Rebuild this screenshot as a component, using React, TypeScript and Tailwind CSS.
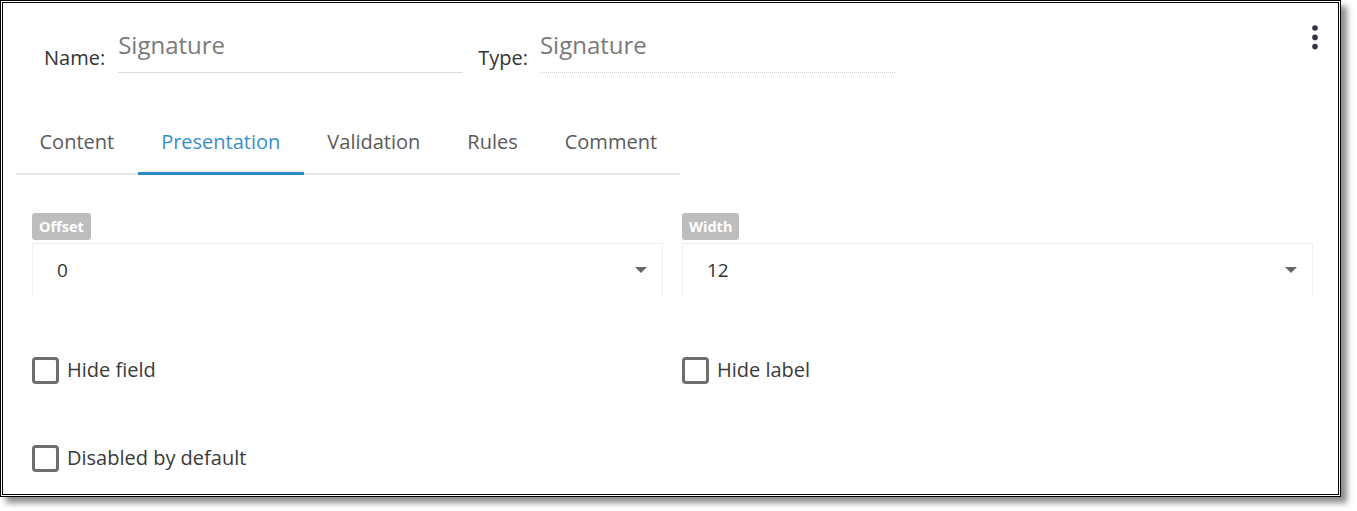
import React from "react";

const font = { fontFamily: '"Open Sans", "Noto Sans", sans-serif' };

function Caret() {
  return (
    <svg width="12" height="6" viewBox="0 0 12 6" className="shrink-0">
      <path d="M0 0 L12 0 L6 6 Z" fill="#666" />
    </svg>
  );
}

function SelectField({ label, value }: { label: string; value: string }) {
  return (
    <div className="flex flex-col items-start">
      <div className="h-[27px] rounded-[3px] bg-[#bdbdbd] px-[7px] text-[14.5px] font-bold leading-[27px] text-white">
        {label}
      </div>
      <div className="mt-[3px] flex h-[53px] w-full items-center justify-between border-x border-t border-[#efefef] pl-[24px] pr-[15px]">
        <span className="text-[19px] text-[#333]">{value}</span>
        <Caret />
      </div>
    </div>
  );
}

function Check({ label }: { label: string }) {
  return (
    <div className="flex items-center">
      <div className="h-[27px] w-[27px] rounded-[4px] border-[3px] border-[#6e6e6e]" />
      <span className="ml-[8px] text-[20px] leading-[28px] text-[#3a3a3a]">{label}</span>
    </div>
  );
}

export default function App() {
  const tabs = ["Content", "Presentation", "Validation", "Rules", "Comment"];
  return (
    <div className="h-[511px] w-[1357px] bg-white" style={font}>
      <div className="h-[497px] w-[1341px] border border-black bg-white p-[1px] shadow-[6px_6px_6px_rgba(0,0,0,0.45)]">
        <div className="relative h-full w-full border border-black">
          {/* header */}
          <div className="flex items-start pl-[41px]">
            <div className="mt-[26px] flex items-end">
              <span className="mb-[1px] text-[20px] leading-[28px] text-[#333]">Name:</span>
              <div className="ml-[13px] w-[345px] border-b border-[#dcdcdc] pb-[11px] text-[24px] leading-[32px] text-[#7a7a7a]">
                Signature
              </div>
            </div>
            <div className="ml-[15px] mt-[26px] flex items-end">
              <span className="mb-[1px] text-[20px] leading-[28px] text-[#333]">Type:</span>
              <div className="ml-[12px] w-[355px] border-b border-dotted border-[#cfcfcf] pb-[11px] text-[24px] leading-[32px] text-[#7a7a7a]">
                Signature
              </div>
            </div>
            <div className="ml-auto mr-[20px] mt-[22px]">
              <svg width="6" height="26" viewBox="0 0 6 26">
                <circle cx="3" cy="3" r="2.8" fill="#2f3540" />
                <circle cx="3" cy="12.4" r="2.8" fill="#2f3540" />
                <circle cx="3" cy="21.6" r="2.8" fill="#2f3540" />
              </svg>
            </div>
          </div>

          {/* tabs */}
          <div className="ml-[13px] mt-[41px] flex w-[664px] border-b-2 border-[#e6e6e6]">
            {tabs.map((t) => {
              const active = t === "Presentation";
              return (
                <div
                  key={t}
                  className={
                    active
                      ? "-mb-[2px] border-b-[3px] border-[#2f8ac6] px-[23.5px] pb-[16px] pt-[14px] text-[20px] leading-[28px] text-[#3a8fc8]"
                      : "-mb-[2px] border-b-[3px] border-transparent px-[23.5px] pb-[16px] pt-[14px] text-[20px] leading-[28px] text-[#5a5a5a]"
                  }
                >
                  {t}
                </div>
              );
            })}
          </div>

          {/* selects */}
          <div className="mt-[38px] grid grid-cols-[631px_631px] gap-x-[19px] pl-[29px]">
            <SelectField label="Offset" value="0" />
            <SelectField label="Width" value="12" />
          </div>

          {/* checkboxes */}
          <div className="mt-[60px] grid grid-cols-[631px_631px] gap-x-[19px] gap-y-[60px] pl-[29px]">
            <Check label="Hide field" />
            <Check label="Hide label" />
            <Check label="Disabled by default" />
          </div>
        </div>
      </div>
    </div>
  );
}
